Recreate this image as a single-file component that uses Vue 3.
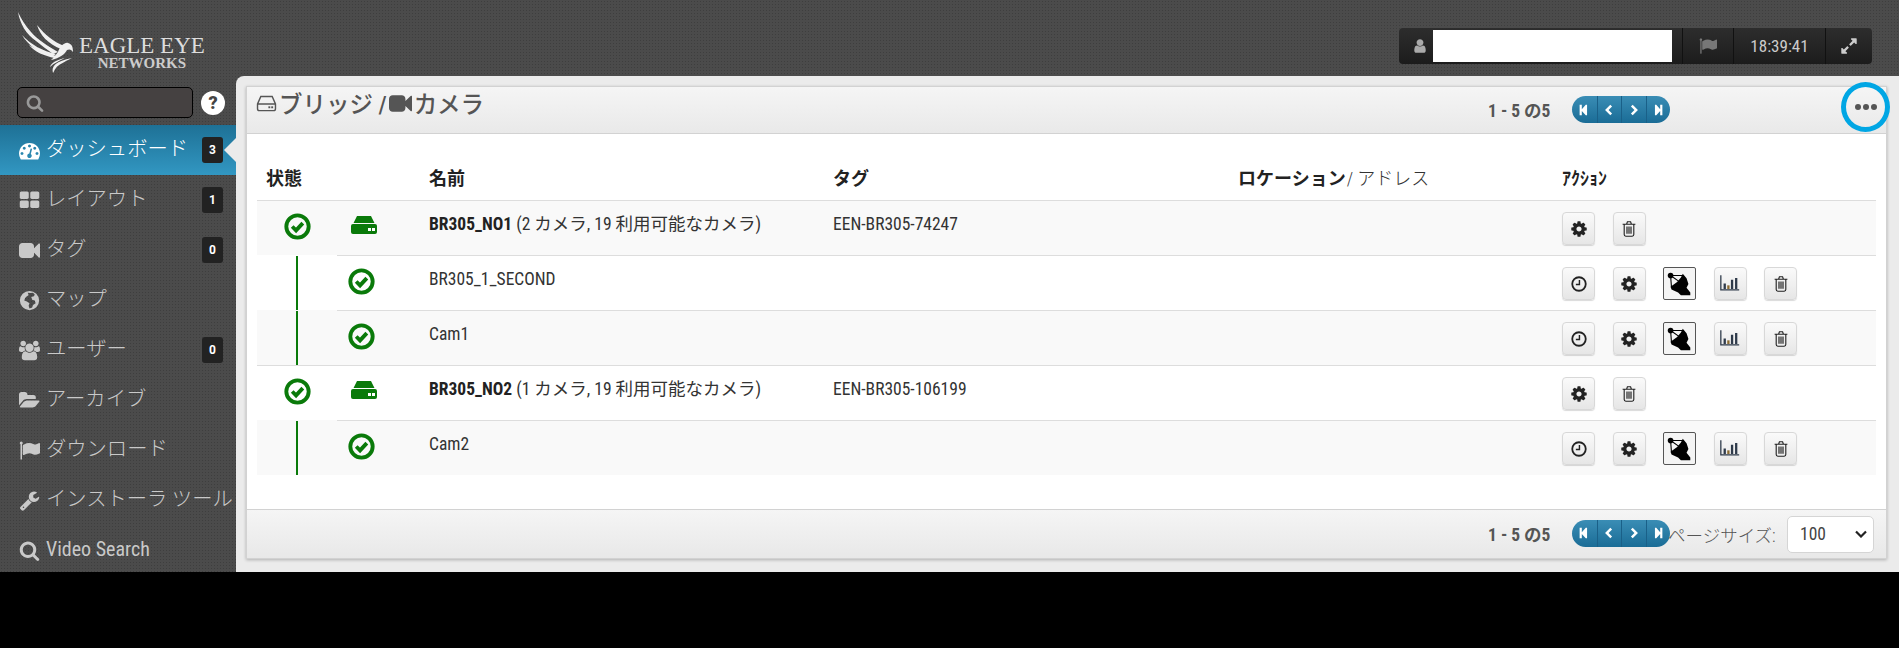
<script setup>
const P = {
  search: ['0 0 1792 1792', 'M1216 832q0-185-131.5-316.5t-316.5-131.5-316.5 131.5-131.5 316.5 131.5 316.5 316.5 131.5 316.5-131.5 131.5-316.5zm512 832q0 52-38 90t-90 38q-54 0-90-38l-343-342q-179 124-399 124-143 0-273.5-55.5t-225-150-150-225-55.5-273.5 55.5-273.5 150-225 225-150 273.5-55.5 273.5 55.5 225 150 150 225 55.5 273.5q0 220-124 399l343 343q37 37 37 90z'],
  cog: ['0 0 1792 1792', 'M1152 896q0-106-75-181t-181-75-181 75-75 181 75 181 181 75 181-75 75-181zm512-109v222q0 12-8 23t-20 13l-185 28q-19 54-39 91 35 50 107 138 10 12 10 25t-9 23q-27 37-99 108t-94 71q-12 0-26-9l-138-108q-44 23-91 38-16 136-29 186-7 28-36 28h-222q-14 0-24.5-8.5t-11.5-21.5l-28-184q-49-16-90-37l-141 107q-10 9-25 9-14 0-25-11-126-114-165-168-7-10-7-23 0-12 8-23 15-21 51-66.5t54-70.5q-27-50-41-99l-183-27q-13-2-21-12.5t-8-23.5v-222q0-12 8-23t19-13l186-28q14-46 39-92-40-57-107-138-10-12-10-24 0-10 9-23 26-36 98.5-107.5t94.5-71.5q13 0 26 10l138 107q44-23 91-38 16-136 29-186 7-28 36-28h222q14 0 24.5 8.5t11.5 21.5l28 184q49 16 90 37l142-107q9-9 24-9 13 0 25 10 129 119 165 170 7 8 7 22 0 12-8 23-15 21-51 66.5t-54 70.5q26 50 41 98l183 28q13 2 21 12.5t8 23.5z'],
  user: ['0 0 1792 1792', 'M1536 1399q0 109-62.5 187t-150.5 78h-854q-88 0-150.5-78t-62.5-187q0-85 8.5-160.5t31.5-152 58.5-131 94-89 134.5-34.5q131 128 313 128t313-128q76 0 134.5 34.5t94 89 58.5 131 31.5 152 8.5 160.5zm-256-887q0 159-112.5 271.5t-271.5 112.5-271.5-112.5-112.5-271.5 112.5-271.5 271.5-112.5 271.5 112.5 112.5 271.5z'],
  grid: ['0 0 1792 1792', 'M832 1024v384q0 52-38 90t-90 38h-512q-52 0-90-38t-38-90v-384q0-52 38-90t90-38h512q52 0 90 38t38 90zm0-768v384q0 52-38 90t-90 38h-512q-52 0-90-38t-38-90v-384q0-52 38-90t90-38h512q52 0 90 38t38 90zm896 768v384q0 52-38 90t-90 38h-512q-52 0-90-38t-38-90v-384q0-52 38-90t90-38h512q52 0 90 38t38 90zm0-768v384q0 52-38 90t-90 38h-512q-52 0-90-38t-38-90v-384q0-52 38-90t90-38h512q52 0 90 38t38 90z'],
  video: ['0 0 1792 1792', 'M1792 352v1088q0 42-39 59-13 5-25 5-27 0-45-19l-403-403v166q0 119-84.5 203.5t-203.5 84.5h-704q-119 0-203.5-84.5t-84.5-203.5v-704q0-119 84.5-203.5t203.5-84.5h704q119 0 203.5 84.5t84.5 203.5v165l403-402q18-19 45-19 12 0 25 5 39 17 39 59z'],
  flag: ['0 0 1792 1792', 'M320 256q0 72-64 110v1266q0 13-9.5 22.5t-22.5 9.5h-64q-13 0-22.5-9.5t-9.5-22.5v-1266q-64-38-64-110 0-53 37.5-90.5t90.5-37.5 90.5 37.5 37.5 90.5zm1472 64v763q0 25-12.5 38.5t-39.5 27.5q-215 116-369 116-61 0-123.5-22t-108.5-48-115.5-48-142.5-22q-192 0-464 146-17 9-33 9-26 0-45-19t-19-45v-742q0-32 31-55 21-14 79-43 236-120 421-120 107 0 200 29t219 88q38 19 88 19 54 0 117.5-21t110-47 88-47 54.5-21q26 0 45 19t19 45z'],
  folder: ['0 0 1920 1792', 'M1879 952q0 31-31 66l-336 396q-43 51-120.5 86.5t-143.5 35.5h-1088q-34 0-60.5-13t-26.5-43q0-31 31-66l336-396q43-51 120.5-86.5t143.5-35.5h1088q34 0 60.5 13t26.5 43zm-343-344v160h-832q-94 0-197 47.5t-164 119.5l-337 396-5 6q0-4-.5-12.5t-.5-12.5v-960q0-92 66-158t158-66h320q92 0 158 66t66 158v32h544q92 0 158 66t66 158z'],
  wrench: ['0 0 1792 1792', 'M448 1472q0-26-19-45t-45-19-45 19-19 45 19 45 45 19 45-19 19-45zm644-420l-682 682q-37 37-90 37-52 0-91-37l-106-108q-38-36-38-90 0-53 38-91l681-681q39 98 114.5 173.5t173.5 114.5zm634-435q0 39-23 106-47 134-164.5 217.5t-258.5 83.5q-185 0-316.5-131.5t-131.5-316.5 131.5-316.5 316.5-131.5q58 0 121.5 16.5t107.5 46.5q16 11 16 28t-16 28l-293 169v224l193 107q5-3 79-48.5t135.5-81 70.5-35.5q15 0 23.5 10t8.5 25z'],
  users: ['0 0 1920 1792', 'M593 896q-162 5-265 128h-134q-82 0-138-40.5t-56-118.5q0-353 124-353 6 0 43.5 21t97.5 42.5 119 21.5q67 0 133-23-5 37-5 66 0 139 81 256zm1071 637q0 120-73 189.5t-194 69.5h-874q-121 0-194-69.5t-73-189.5q0-53 3.5-103.5t14-109 26.5-108.5 43-97.5 62-81 85.5-53.5 111.5-20q10 0 43 21.5t73 48 107 48 135 21.5 135-21.5 107-48 73-48 43-21.5q61 0 111.5 20t85.5 53.5 62 81 43 97.5 26.5 108.5 14 109 3.5 103.5zm-1024-1277q0 106-75 181t-181 75-181-75-75-181 75-181 181-75 181 75 75 181zm704 384q0 159-112.5 271.5t-271.5 112.5-271.5-112.5-112.5-271.5 112.5-271.5 271.5-112.5 271.5 112.5 112.5 271.5zm576 225q0 78-56 118.5t-138 40.5h-134q-103-123-265-128 81-117 81-256 0-29-5-66 66 23 133 23 59 0 119-21.5t97.5-42.5 43.5-21q124 0 124 353zm-128-609q0 106-75 181t-181 75-181-75-75-181 75-181 181-75 181 75 75 181z'],
  dash: ['0 0 1792 1792', 'M384 1152q0-53-37.5-90.5t-90.5-37.5-90.5 37.5-37.5 90.5 37.5 90.5 90.5 37.5 90.5-37.5 37.5-90.5zm192-448q0-53-37.5-90.5t-90.5-37.5-90.5 37.5-37.5 90.5 37.5 90.5 90.5 37.5 90.5-37.5 37.5-90.5zm428 481l101-382q6-26-7.5-48.5t-38.5-29.5-48 6.5-30 39.5l-101 382q-60 5-107 43.5t-63 98.5q-20 77 20 146t117 89 146-20 89-117q16-60-6-117t-72-91zm660-33q0-53-37.5-90.5t-90.5-37.5-90.5 37.5-37.5 90.5 37.5 90.5 90.5 37.5 90.5-37.5 37.5-90.5zm-640-640q0-53-37.5-90.5t-90.5-37.5-90.5 37.5-37.5 90.5 37.5 90.5 90.5 37.5 90.5-37.5 37.5-90.5zm448 192q0-53-37.5-90.5t-90.5-37.5-90.5 37.5-37.5 90.5 37.5 90.5 90.5 37.5 90.5-37.5 37.5-90.5zm320 448q0 261-141 483-19 29-54 29h-1402q-35 0-54-29-141-221-141-483 0-182 71-348t191-286 286-191 348-71 348 71 286 191 191 286 71 348z'],
  globe: ['0 0 24 24', 'M12 1a11 11 0 1 0 0 22 11 11 0 0 0 0-22zM10 3l3 .5 3-.5 2 2-1 2-3 1 1 3 3 1 1 3-3 2-1 3-3 1-1-3 1-3-3-2-3-1 1-3 2-2 2-1z'],
  expand: ['0 0 1792 1792', 'M883 1056q0 13-10 23l-332 332 144 144q19 19 19 45t-19 45-45 19h-448q-26 0-45-19t-19-45v-448q0-26 19-45t45-19 45 19l144 144 332-332q10-10 23-10t23 10l114 114q10 10 10 23zm781-864v448q0 26-19 45t-45 19-45-19l-144-144-332 332q-10 10-23 10t-23-10l-114-114q-10-10-10-23t10-23l332-332-144-144q-19-19-19-45t19-45 45-19h448q26 0 45 19t19 45z'],
}
const navPaths = ['M3 2h2.500v5L10 2h1.500v12H10L5.500 9v5H3z', 'M9.500 2l2 2-4 4 4 4-2 2-6-6z', 'M6.500 2l-2 2 4 4-4 4 2 2 6-6z', 'M13 2h-2.500v5L6 2H4.500v12H6l4.500-5v5H13z']
const menu = [
  { icon: 'dash', label: 'ダッシュボード', badge: 3, active: true },
  { icon: 'grid', label: 'レイアウト', badge: 1 },
  { icon: 'video', label: 'タグ', badge: 0 },
  { icon: 'globe', label: 'マップ' },
  { icon: 'users', label: 'ユーザー', badge: 0 },
  { icon: 'folder', label: 'アーカイブ' },
  { icon: 'flag', label: 'ダウンロード' },
  { icon: 'wrench', label: 'インストーラ ツール' },
  { icon: 'search', label: 'Video Search', latin: true },
]
const rows = [
  { bridge: true, name: 'BR305_NO1', info: ' (2 カメラ, 19 利用可能なカメラ)', tag: 'EEN-BR305-74247', stripe: true },
  { name: 'BR305_1_SECOND', link: true },
  { name: 'Cam1', link: true, stripe: true },
  { bridge: true, name: 'BR305_NO2', info: ' (1 カメラ, 19 利用可能なカメラ)', tag: 'EEN-BR305-106199' },
  { name: 'Cam2', link: true, stripe: true },
]
</script>

<template>
  <div class="page">
    <div class="shell">
      <aside class="side">
        <div class="logo">
          <svg class="wing" viewBox="0 0 56 62" width="56" height="62">
            <g fill="#f0f0f0">
              <path d="M0 0C2 12 8 22 18 29c6 5 12 9 17 13l5-2C30 34 20 28 13 20 7 13 3 7 0 0z"/>
              <path d="M19 13c3 10 11 19 24 24l3-3C36 30 27 23 19 13z"/>
              <path d="M4 23c6 10 16 18 31 21l3-2C25 39 13 33 4 23z"/>
              <path d="M11 33c6 7 15 11 26 13l2-2c-10-2-20-6-28-11z"/>
              <path d="M40 40c2-6 7-10 10-9 4 1 5 4 5 9-2-3-4-3-6-2-2 4-7 8-16 10 3-3 5-5 7-8z"/>
              <path d="M35 61c-2-7 3-12 19-15-8 4-14 7-16 10-2 2-2 4-3 5z"/>
              <path d="M32 55c1-4 6-7 15-9-6 3-11 5-15 9z"/>
            </g>
          </svg>
          <div class="wordmark">
            <div class="w1">EAGLE EYE</div>
            <div class="w2">NETWORKS</div>
          </div>
        </div>
        <div class="searchrow">
          <div class="searchbox">
            <svg viewBox="0 0 1792 1792" width="18" height="18"><path fill="#999" :d="P.search[1]"/></svg>
          </div>
          <div class="help">?</div>
        </div>
        <nav class="menu">
          <div v-for="m in menu" :key="m.label" class="item" :class="{ active: m.active, latin: m.latin }">
            <svg class="micon" :viewBox="P[m.icon][0]" width="21" height="21"><path fill="currentColor" fill-rule="evenodd" :d="P[m.icon][1]"/></svg>
            <span class="mlabel">{{ m.label }}</span>
            <span v-if="m.badge !== undefined" class="badge">{{ m.badge }}</span>
          </div>
        </nav>
      </aside>

      <div class="mainwrap">
        <header class="top">
          <div class="toolbar">
            <div class="tb tbuser">
              <svg viewBox="0 0 1792 1792" width="16" height="16"><path fill="#aaa" :d="P.user[1]"/></svg>
              <div class="namebox"></div>
            </div>
            <div class="tb tbflag"><svg viewBox="0 0 1792 1792" width="18" height="18"><path fill="#777" :d="P.flag[1]"/></svg></div>
            <div class="tb tbtime">18:39:41</div>
            <div class="tb tbexp"><svg viewBox="0 0 1792 1792" width="18" height="18"><path fill="#ccc" :d="P.expand[1]"/></svg></div>
          </div>
        </header>
        <main class="content">
          <section class="panel">
            <div class="phead">
              <div class="ptitle">
                <svg class="hdd" viewBox="0 0 22 18" width="21" height="17"><path fill="none" stroke="#555" stroke-width="1.500" d="M5 1.500h12l3.500 8v5a2 2 0 0 1-2 2h-15a2 2 0 0 1-2-2v-5zM1.500 9.500h19"/><rect x="13" y="12" width="2" height="2" fill="#555"/><rect x="16" y="12" width="2" height="2" fill="#555"/></svg>
                <span>ブリッジ /</span>
                <svg viewBox="0 0 1792 1792" width="23" height="23"><path fill="#555" :d="P.video[1]"/></svg>
                <span>カメラ</span>
              </div>
              <div class="pager headpager">
                <span class="count">1 - 5 の5</span>
                <div class="pill">
                  <span v-for="d in navPaths" :key="d" class="seg"><svg viewBox="0 0 16 16" width="14" height="14"><path fill="#fff" :d="d"/></svg></span>
                </div>
              </div>
              <div class="ring"><span class="dots"><i></i><i></i><i></i></span></div>
            </div>
            <div class="pbody">
              <div class="row headrow">
                <div class="c1">状態</div><div class="c2"></div><div class="c3">名前</div><div class="c4">タグ</div>
                <div class="c5">ロケーション<span class="thin"> / アドレス</span></div><div class="c6 hw">ｱｸｼｮﾝ</div>
              </div>
              <div v-for="r in rows" :key="r.name" class="row datarow" :class="{ stripe: r.stripe, bridge: r.bridge, child: r.link }">
                <div class="c1">
                  <svg v-if="r.bridge" class="chk" viewBox="0 0 28 28" width="27" height="27"><circle cx="14" cy="14" r="11.600" fill="none" stroke="#0a7a0a" stroke-width="4"/><path fill="none" stroke="#0a7a0a" stroke-width="4" d="M8.500 14l4 4 7-7.500"/></svg>
                  <span v-else class="vline"></span>
                </div>
                <div class="c2">
                  <svg v-if="r.bridge" class="gh" viewBox="0 0 26 18" width="26" height="18"><path fill="#0a7a0a" d="M6 0h14l3.500 7h-21zM2 8h22a2 2 0 0 1 2 2v6a2 2 0 0 1-2 2H2a2 2 0 0 1-2-2v-6a2 2 0 0 1 2-2z"/><rect x="17" y="12" width="3" height="3" fill="#fff"/><rect x="21" y="12" width="3" height="3" fill="#fff"/></svg>
                  <svg v-else class="chk" viewBox="0 0 28 28" width="27" height="27"><circle cx="14" cy="14" r="11.600" fill="none" stroke="#0a7a0a" stroke-width="4"/><path fill="none" stroke="#0a7a0a" stroke-width="4" d="M8.500 14l4 4 7-7.500"/></svg>
                </div>
                <div class="c3 txt"><b v-if="r.bridge">{{ r.name }}</b><template v-else>{{ r.name }}</template><span v-if="r.info">{{ r.info }}</span></div>
                <div class="c4 txt">{{ r.tag }}</div>
                <div class="c5"></div>
                <div class="c6 acts">
                  <button v-if="r.link" class="btn"><svg viewBox="0 0 20 20" width="18" height="18"><circle cx="10" cy="10" r="7.500" fill="none" stroke="#222" stroke-width="2"/><path fill="none" stroke="#222" stroke-width="1.600" d="M10.500 5.500v5h-4"/></svg></button>
                  <button class="btn"><svg viewBox="0 0 1792 1792" width="18" height="18"><path fill="#222" :d="P.cog[1]"/></svg></button>
                  <button v-if="r.link" class="btn dish"><svg viewBox="0 0 33 33" width="31" height="31"><circle cx="7" cy="8" r="3" fill="#000"/><path fill="none" stroke="#000" stroke-width="1.200" d="M7 8h14M7 8l1 13M7 8l10 7"/><path fill="#000" d="M20 6l4 5 2 6-2 4 4 5v3h-10l-3-3-7-3-1-3 7-5 4-5z"/></svg></button>
                  <button v-if="r.link" class="btn"><svg viewBox="0 0 24 20" width="22" height="19"><path fill="none" stroke="#2e3a4a" stroke-width="1.400" d="M2 1v16h20"/><path fill="#2e3a4a" d="M5 10h2.500v6H5zM13 6h2.500v10H13zM17.500 4H20v12h-2.500z"/><path fill="#8a6a30" d="M9 12h2.500v4H9z"/></svg></button>
                  <button class="btn"><svg viewBox="0 0 20 22" width="16" height="18"><path fill="none" stroke="#222" stroke-width="1.400" d="M2 5h16M4 5v13a2 2 0 0 0 2 2h8a2 2 0 0 0 2-2V5M7 5l1-3h4l1 3"/><path fill="none" stroke="#222" stroke-width="1.500" d="M7.500 8v9M10 8v9M12.500 8v9"/></svg></button>
                </div>
              </div>
            </div>
            <div class="pfoot">
              <div class="pager footpager">
                <span class="count">1 - 5 の5</span>
                <div class="pill">
                  <span v-for="d in navPaths" :key="d" class="seg"><svg viewBox="0 0 16 16" width="14" height="14"><path fill="#fff" :d="d"/></svg></span>
                </div>
              </div>
              <span class="psize">ページサイズ:</span>
              <div class="sel"><span>100</span><svg viewBox="0 0 12 8" width="12" height="8"><path fill="none" stroke="#222" stroke-width="2.200" d="M1 1.500l5 5 5-5"/></svg></div>
            </div>
          </section>
        </main>
      </div>
    </div>
    <div class="blackbar"></div>
  </div>
</template>

<style scoped>
.page { height: 648px; display: flex; flex-direction: column; overflow: hidden; font-family: "Roboto Condensed", Roboto, "Noto Sans CJK JP", sans-serif; font-stretch: 75%; color: #333; }
.shell { height: 572px; flex: none; display: flex; background-color: #4b4b4b; background-image: radial-gradient(#3e3e3e 0.8px, transparent 1px); background-size: 3px 3px; }
.blackbar { flex: 1; background: #000; }
.side { width: 236px; flex: none; }
.logo { height: 76px; padding: 12px 0 0 18px; box-sizing: border-box; display: flex; }
.wing { flex: none; }
.wordmark { margin: 22px 0 0 5px; text-align: center; font-family: "Liberation Serif", serif; color: #ddd; line-height: 1; }
.w1 { font-size: 23px; white-space: nowrap; }
.w2 { font-size: 15px; margin-top: -1px; font-weight: 700; color: #ccc; }
.searchrow { display: flex; align-items: center; padding: 11px 0 0 17px; gap: 8px; }
.searchbox { width: 176px; height: 31px; box-sizing: border-box; background: #454141; border: 1px solid #000; border-radius: 5px; padding: 6px 0 0 8px; }
.help { width: 24px; height: 24px; border-radius: 50%; background: #fff; color: #444; font: 900 18px/24px Roboto, sans-serif; text-align: center; }
.menu { margin-top: 7px; }
.item { height: 50px; display: flex; align-items: center; padding: 0 13px 0 19px; color: #c9c9c9; font-size: 20.300px; font-weight: 300; position: relative; white-space: nowrap; }
.item.latin { font-size: 20px; font-weight: 400; }
.item.active { background: linear-gradient(#1e7196, #3297c2); color: #fff; }
.item.active::after { content: ""; position: absolute; right: 0; top: 13px; border: 12px solid transparent; border-right-color: #ebebeb; border-left-width: 0; }
.micon { flex: none; margin-right: 6px; }
.mlabel { flex: 1; padding-bottom: 6px; }
.latin .mlabel { padding-bottom: 2px; }
.badge { width: 21px; height: 26px; flex: none; border-radius: 3px; background: #222; color: #fff; font: 700 12px/26px Roboto, sans-serif; text-align: center; }
.mainwrap { flex: 1; min-width: 0; display: flex; flex-direction: column; }
.top { height: 76px; flex: none; box-sizing: border-box; padding: 28px 27px 0 0; display: flex; justify-content: flex-end; }
.toolbar { height: 36px; display: flex; background: linear-gradient(#2d2d2d, #1c1c1c); border-radius: 4px; color: #ccc; }
.tb { display: flex; align-items: center; justify-content: center; border-right: 1px solid #111; box-sizing: border-box; }
.tbuser { width: 284px; justify-content: flex-start; padding-left: 13px; gap: 5px; }
.namebox { width: 239px; height: 32px; background: #fff; }
.tbflag { width: 51px; }
.tbtime { width: 92px; font-size: 17px; }
.tbexp { width: 46px; border: 0; }
.content { flex: 1; min-height: 0; background: #ebebeb; border-top-left-radius: 8px; padding: 10px 12px 0 10px; }
.panel { height: 473px; display: flex; flex-direction: column; background: #fff; border: 1px solid #d2d2d2; box-sizing: border-box; box-shadow: 0 1px 3px rgba(0,0,0,.25); position: relative; }
.phead { height: 47px; flex: none; box-sizing: border-box; background: linear-gradient(#f5f5f5, #e9e9e9); border-bottom: 1px solid #d2d2d2; display: flex; padding-left: 9px; }
.ptitle { display: flex; align-items: center; height: 32px; gap: 2px; font-size: 23.500px; font-weight: 500; color: #555; }
.hdd { flex: none; }
.pager { display: flex; align-items: center; }
.headpager { margin-left: auto; margin-right: 216px; height: 45px; }
.footpager { margin-top: -2px; }
.count { font-size: 17.500px; font-weight: 700; color: #555; width: 84px; }
.pill { display: flex; height: 27px; border-radius: 14px; overflow: hidden; background: linear-gradient(#3a8db5, #1a6c96); }
.seg { width: 24.500px; display: flex; align-items: center; justify-content: center; border-left: 1px solid #1a6088; box-sizing: border-box; }
.seg:first-child { border: 0; }
.ring { position: absolute; right: -4px; top: -5px; width: 49px; height: 50px; box-sizing: border-box; border: 5px solid #00a6e4; border-radius: 50%; display: flex; align-items: center; justify-content: center; }
.dots { display: flex; gap: 2px; }
.dots i { width: 6px; height: 6px; border-radius: 50%; background: #555; }
.pbody { flex: 1; padding: 0 10px; }
.row { display: grid; grid-template-columns: 80px 92px 404px 405px 324px 1fr; }
.headrow { height: 66px; box-sizing: border-box; padding: 33px 0 0 0; font-size: 18px; font-weight: 700; color: #222; line-height: 24px; }
.headrow .c1 { padding-left: 9px; justify-content: flex-start; }
.thin { font-weight: 300; color: #333; margin-left: -3px; }
.hw { font-weight: 700; }
.datarow { height: 55px; box-sizing: border-box; position: relative; border-top: 1px solid transparent; }
.stripe { background: #f9f9f9; }
.datarow > div { border-top: 1px solid #ddd; margin-top: -1px; }
.child > .c1 { border-top: 0; margin-top: 0; }
.c1 { display: flex; justify-content: center; }
.c2 { display: flex; padding-left: 11px; }
.chk { margin-top: 12px; flex: none; }
.gh { margin: 15px 0 0 3px; flex: none; }
.vline { width: 2px; background: #0a7a0a; margin-left: -1px; }
.txt { font-size: 17.500px; line-height: 24px; padding-top: 11px; color: #333; white-space: nowrap; }
.txt b { color: #222; font-weight: 700; }
.acts { display: flex; gap: 17.500px; padding-top: 11px; }
.btn { width: 33px; height: 33px; padding: 0; flex: none; border: 1px solid #d8d8d8; border-radius: 4px; background: linear-gradient(#fafafa, #e6e6e6); box-shadow: 0 1px 1px rgba(0,0,0,.15); display: flex; align-items: center; justify-content: center; }
.dish { background: #f4f4f4; border: 1px solid #555; box-shadow: none; border-radius: 2px; }
.pfoot { height: 49px; flex: none; box-sizing: border-box; border-top: 1px solid #d2d2d2; background: linear-gradient(#f5f5f5, #e8e8e8); display: flex; align-items: center; padding-left: 1241px; }
.psize { font-size: 17.500px; font-weight: 300; color: #555; width: 119px; white-space: nowrap; margin-left: -2px; }
.sel { width: 87px; height: 37px; box-sizing: border-box; background: #fff; border: 1px solid #d5d5d5; border-radius: 5px; display: flex; align-items: center; justify-content: space-between; padding: 0 6px 0 12px; font-size: 17.500px; color: #444; }
</style>

<style>
body { background: #000; }
</style>
